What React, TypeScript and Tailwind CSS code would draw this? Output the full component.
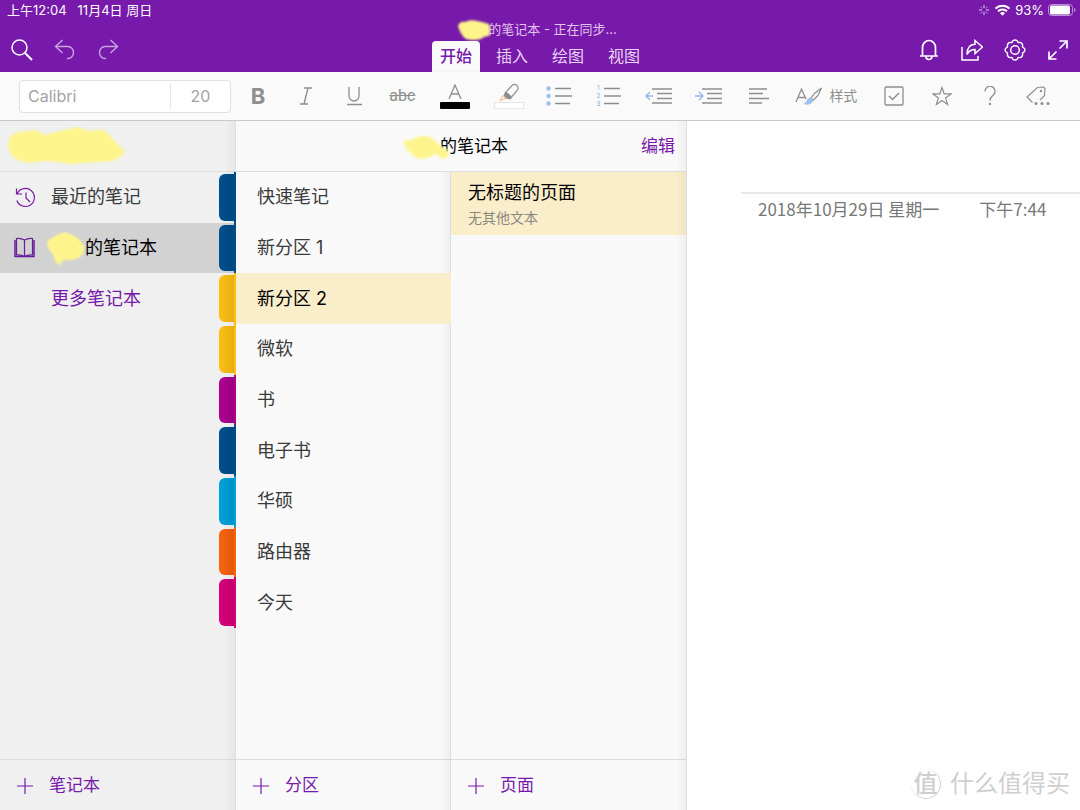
import { useState } from 'react';
import type { ReactNode } from 'react';
import clsx from 'clsx';

const sections = [
  { name: '快速笔记', color: 'bg-[#004f8d]' },
  { name: '新分区 1', color: 'bg-[#004f8d]' },
  { name: '新分区 2', color: 'bg-[#ffc013]' },
  { name: '微软', color: 'bg-[#ffc013]' },
  { name: '书', color: 'bg-[#ae008e]' },
  { name: '电子书', color: 'bg-[#004f8d]' },
  { name: '华硕', color: 'bg-[#00a2dc]' },
  { name: '路由器', color: 'bg-[#f9640c]' },
  { name: '今天', color: 'bg-[#d8007a]' },
];

const ribbonTabs = ['开始', '插入', '绘图', '视图'];

function Icon({ w = 22, h = 22, children }: { w?: number; h?: number; children: ReactNode }) {
  return (
    <svg
      width={w}
      height={h}
      viewBox={`0 0 ${w} ${h}`}
      fill="none"
      stroke="currentColor"
      strokeWidth="1.5"
      className="shrink-0"
      aria-hidden="true"
    >
      {children}
    </svg>
  );
}

// Marker scribble that hides a name
function Smudge({ className, d, viewBox }: { className: string; d: string; viewBox: string }) {
  return (
    <svg className={clsx('shrink-0 overflow-visible blur-[1px]', className)} viewBox={viewBox} aria-hidden="true">
      <path d={d} fill="#fdf58c" />
    </svg>
  );
}

function ToolButton({ label, className = 'w-8', children }: { label: string; className?: string; children: ReactNode }) {
  return (
    <button aria-label={label} className={clsx('flex h-9 shrink-0 items-center justify-center', className)}>
      {children}
    </button>
  );
}

function AddButton({ label }: { label: string }) {
  return (
    <button className="flex h-[51px] w-full shrink-0 items-center gap-4 border-t border-[#dcdcdc] pt-px pl-[17px] text-[17px] text-[#7719aa]">
      <Icon w={16} h={16}>
        <path d="M8 0v16M0 8h16" strokeWidth="1.2" />
      </Icon>
      {label}
    </button>
  );
}

// Soft shade along the right edge of a panel
function EdgeShade() {
  return (
    <div className="pointer-events-none absolute inset-y-0 right-0 w-3 border-r border-[#dedede] bg-linear-to-r from-transparent to-black/4" />
  );
}

function StatusBar() {
  return (
    <div className="flex h-5 items-center justify-between pr-[4px] pl-[7px] text-[13px] leading-5">
      <div className="flex gap-[11px]">
        <span>上午12:04</span>
        <span>11月4日 周日</span>
      </div>
      <div className="flex items-center gap-1">
        <Icon w={12} h={12}>
          <path d="M6 1v3M6 8v3M1 6h3M8 6h3" strokeWidth="1" opacity=".8" />
          <path d="M2.5 2.5l2 2M7.5 7.5l2 2M9.5 2.5l-2 2M4.500 7.500l-2 2" strokeWidth="1" opacity=".5" />
        </Icon>
        <Icon w={17} h={12}>
          <path d="M1.500 4.600a10 10 0 0 1 14 0M4 7.300a6.400 6.400 0 0 1 9 0" strokeWidth="2" />
          <path d="M6 9.200a3.600 3.600 0 0 1 5 0l-2.500 2.600z" fill="currentColor" stroke="none" />
        </Icon>
        <span>93%</span>
        <Icon w={28} h={12}>
          <rect x=".5" y=".5" width="24" height="11" rx="3" strokeWidth="1" opacity=".5" />
          <rect x="2" y="1.500" width="20" height="9" rx="1.500" fill="currentColor" stroke="none" />
          <path d="M26 4v4c1-.3 1.500-1 1.500-2S27 4.300 26 4z" fill="currentColor" stroke="none" opacity=".5" />
        </Icon>
      </div>
    </div>
  );
}

function AppBar() {
  const [active, setActive] = useState('开始');

  return (
    <header className="bg-[#7719aa] text-white">
      <StatusBar />
      <div className="grid h-[52px] grid-cols-[1fr_auto_1fr]">
        <div className="flex items-center gap-[21px] pt-2 pl-[11px]">
          <button aria-label="搜索">
            <Icon>
              <circle cx="8.500" cy="8.500" r="7.500" />
              <path d="M14 14l7 7" strokeWidth="2" />
            </Icon>
          </button>
          <button aria-label="撤消" className="opacity-60">
            <Icon>
              <path d="M8.500 1L1.500 7.500l7 6.500M1.500 7.500h12.500a5.500 6 0 0 1 0 12h-1" strokeWidth="1.400" />
            </Icon>
          </button>
          <button aria-label="恢复" className="opacity-60">
            <Icon>
              <path d="M13.500 1l7 6.500-7 6.500M20.500 7.500H8a5.500 6 0 0 0 0 12h1" strokeWidth="1.400" />
            </Icon>
          </button>
        </div>

        <div className="flex flex-col items-center">
          <p className="mr-[6px] flex h-[19px] items-center text-[13px] text-[#e0c5ee]">
            <Smudge
              className="-mr-0.5 h-5 w-[33px]"
              viewBox="0 0 33 20"
              d="M1 6Q3 1 8 2Q13 -1 20 1Q26 2 32 4Q34 10 32 16Q27 16 24 19Q16 21 9 19Q4 16 1 6Z"
            />
            的笔记本 - 正在同步...
          </p>
          <nav className="mt-0.5 flex h-[31px] gap-2">
            {ribbonTabs.map((tab) => (
              <button
                key={tab}
                onClick={() => setActive(tab)}
                className={clsx(
                  'w-12 rounded-t pb-0.5 text-base',
                  active === tab ? 'bg-[#fafafa] font-medium text-[#7719aa]' : 'text-[#ead5f4]'
                )}
              >
                {tab}
              </button>
            ))}
          </nav>
        </div>

        <div className="flex items-center justify-end gap-[21px] pt-2 pr-[11px]">
          <button aria-label="通知">
            <Icon>
              <path d="M2 17h18M4.500 17V8.500a6.500 7 0 0 1 13 0V17M8 17.500a3 3 0 0 0 6 0" strokeWidth="1.700" />
            </Icon>
          </button>
          <button aria-label="共享">
            <Icon>
              <path d="M1 8v13h16v-4" />
              <path d="M14 1.500L21.500 8l-7.500 6.500v-4c-4 0-6.500 2-8 5C6 9 8.500 5.500 14 5.300z" />
            </Icon>
          </button>
          <button aria-label="设置">
            <Icon>
              <circle cx="11" cy="11" r="4.300" />
              <path
                d="M8.800 1.800Q11 .2 13.200 1.800L14 3.500 16.200 3.400Q18.700 4.200 18.600 6.600L18.500 8 20.200 9.200Q21.500 11 20.200 12.800L18.500 14 18.600 15.800Q18.300 18.300 15.800 18.600L14 18.500 13.200 20.200Q11 21.800 8.800 20.200L8 18.500 6.200 18.600Q3.700 18.300 3.400 15.800L3.500 14 1.800 12.800Q.5 11 1.800 9.200L3.500 8 3.400 6.200Q3.700 3.700 6.200 3.400L8 3.500z"
                strokeLinejoin="round"
                strokeWidth="1.400"
              />
            </Icon>
          </button>
          <button aria-label="全屏">
            <Icon>
              <path d="M12.500 2H20v7.500M20 2l-7.500 7.500M2 12.500V20h7.500M2 20l7.500-7.500" strokeWidth="1.700" />
            </Icon>
          </button>
        </div>
      </div>
    </header>
  );
}

function Toolbar() {
  return (
    <div className="relative flex h-[49px] items-center border-b border-[#c9c9c9] bg-[#fafafa] pl-[19px] text-[#8e8e8e] shadow-[0_1px_4px_rgba(0,0,0,0.08)]">
      <div className="flex h-[33px] w-[212px] shrink-0 items-center rounded border border-[#e0e0e0] bg-white text-base text-[#a3a3a3]">
        <select aria-label="字体" className="h-full w-[150px] appearance-none px-2 outline-none">
          <option>Calibri</option>
        </select>
        <select
          aria-label="字号"
          className="h-[26px] flex-1 appearance-none border-l border-[#e6e6e6] text-center outline-none [text-align-last:center]"
        >
          <option>20</option>
        </select>
      </div>

      <div className="flex flex-1 items-center justify-between pr-[26px] pl-[11px]">
        <ToolButton label="加粗">
          <span className="text-[22px] leading-6 font-bold">B</span>
        </ToolButton>
        <ToolButton label="倾斜">
          <Icon w={12} h={18}>
            <path d="M4 1h8M0 17h8M8 1L4 17" strokeWidth="1.400" />
          </Icon>
        </ToolButton>
        <ToolButton label="下划线">
          <Icon w={16} h={20}>
            <path d="M3 1v9a5 5 0 0 0 10 0V1M1 18.500h15" strokeWidth="1.300" />
          </Icon>
        </ToolButton>
        <ToolButton label="删除线">
          <span className="font-['Roboto'] text-base line-through">abc</span>
        </ToolButton>
        <ToolButton label="字体颜色" className="w-10 flex-col gap-[3px]">
          <Icon w={14} h={15}>
            <path d="M1 15L7 1l6 14M3.300 10h7.400" strokeWidth="1.300" />
          </Icon>
          <span className="h-[7px] w-[30px] rounded-[1px] bg-black" />
        </ToolButton>
        <ToolButton label="突出显示" className="w-9 flex-col">
          <Icon w={20} h={19}>
            <path d="M7.500 8.500L13.500 2Q15.500 .500 18 2.500Q20 5 18.500 7L13 13.500" strokeWidth="1.200" />
            <path d="M6.500 8l7 6-2 2.500-4.500-1-2.500-3z" fill="currentColor" stroke="none" />
            <path d="M4 12.500l3 3-6 2z" stroke="#f6b77b" strokeWidth="1" />
          </Icon>
          <span className="h-[7px] w-[30px] border border-[#e6e6e6] bg-white" />
        </ToolButton>
        <ToolButton label="项目符号">
          <Icon w={26} h={20}>
            <path d="M9 2.500h16M9 10h17M9 17.500h15" strokeWidth="1.300" />
            <g fill="#9cbfe8" stroke="none">
              <circle cx="2.500" cy="2.500" r="2.200" />
              <circle cx="2.500" cy="10" r="2.200" />
              <circle cx="2.500" cy="17.500" r="2.200" />
            </g>
          </Icon>
        </ToolButton>
        <ToolButton label="编号" className="w-9 gap-1">
          <span className="flex flex-col font-['Roboto'] text-[7px] leading-[8px] text-[#7fb0e8]">
            <span>1</span>
            <span>2</span>
            <span>3</span>
          </span>
          <Icon w={17} h={20}>
            <path d="M0 2.500h16M0 10h17M0 17.500h15" strokeWidth="1.300" />
          </Icon>
        </ToolButton>
        <ToolButton label="减少缩进">
          <Icon w={28} h={18}>
            <path d="M7 2h20M12 6.500h15M12 11.500h15M7 16h20" strokeWidth="1.300" />
            <path d="M8 9H1.500M5 5L1 9l4 4" stroke="#8fb8e8" strokeWidth="1.300" />
          </Icon>
        </ToolButton>
        <ToolButton label="增加缩进" className="w-9">
          <Icon w={28} h={18}>
            <path d="M7 2h20M12 6.500h15M12 11.500h15M7 16h20" strokeWidth="1.300" />
            <path d="M0 9h7.500M4 5l4 4-4 4" stroke="#8fb8e8" strokeWidth="1.300" />
          </Icon>
        </ToolButton>
        <ToolButton label="对齐">
          <Icon w={20} h={18}>
            <path d="M0 2h18M0 6.500h14M0 11.500h20M0 16h13" strokeWidth="1.300" />
          </Icon>
        </ToolButton>
        <button className="flex h-9 w-[70px] shrink-0 items-center justify-center gap-[6px] text-sm">
          <Icon w={28} h={20}>
            <path d="M1 16L6.500 3 11 13M3 11.500h6.500" strokeWidth="1.300" />
            <path d="M26.500 2l-6.500 5-4 5 2 2.500 5-5z" strokeWidth="1.200" />
            <path d="M15 11.500c-3 .5-3 4.500-6.500 6.500 4.500 1.500 9 .5 9.500-4z" fill="#9cc3f0" stroke="none" />
          </Icon>
          样式
        </button>
        <ToolButton label="待办事项">
          <Icon w={20} h={20}>
            <rect x="1" y="1" width="18" height="18" rx="1" strokeWidth="1.300" />
            <path d="M5 10l3.500 3.500L15 7" />
          </Icon>
        </ToolButton>
        <ToolButton label="重要">
          <Icon w={20} h={20}>
            <path d="M10 1.500l2.200 6.300 6.800.1-5.400 4 2 6.500L10 14.500l-5.600 3.900 2-6.500-5.400-4 6.800-.1z" strokeWidth="1.200" />
          </Icon>
        </ToolButton>
        <ToolButton label="问题">
          <Icon w={12} h={20}>
            <path d="M1 5.500a5 5 0 1 1 8.500 3.300C7.500 10.500 6 11.500 6 14.500" strokeWidth="1.300" />
            <circle cx="6" cy="18" r="1.200" fill="currentColor" stroke="none" />
          </Icon>
        </ToolButton>
        <ToolButton label="更多标记">
          <Icon w={24} h={20}>
            <path d="M6.500 16.500L1 11 11.500 1.500l6-.5 1.500 1.500-.5 7-4.500 4.500" strokeWidth="1.200" />
            <g fill="currentColor" stroke="none">
              <circle cx="15" cy="5" r="1.200" />
              <circle cx="10" cy="17.500" r="1.500" />
              <circle cx="16" cy="17.500" r="1.500" />
              <circle cx="22" cy="17.500" r="1.500" />
            </g>
          </Icon>
        </ToolButton>
      </div>
    </div>
  );
}

function NotebookPanel() {
  return (
    <aside className="relative flex w-[236px] shrink-0 flex-col bg-[#f0f0f0]">
      <div className="flex h-[51px] shrink-0 items-center border-b border-[#dedede] pl-2">
        <Smudge
          className="h-[38px] w-[117px]"
          viewBox="0 0 117 38"
          d="M1 14Q2 6 12 5L28 3L36 8L70 0L80 4L96 3Q104 10 108 16L117 24Q114 30 104 34L62 37Q50 34 34 34Q20 38 8 32Q-2 24 1 14Z"
        />
      </div>
      <ul className="grid h-[152px] grid-rows-3 text-lg text-[#3a3a3a]">
        <li>
          <button className="flex h-full w-full items-center gap-[15px] pl-[15px]">
            <span className="text-[#7719aa]">
              <Icon w={21} h={21}>
                <path d="M2.300 6.500a9 9 0 1 1-.4 7M1.500 1.500V7H7M11 5.500v5.500l4 4" strokeWidth="1.200" />
              </Icon>
            </span>
            最近的笔记
          </button>
        </li>
        <li>
          <button className="flex h-full w-full items-center bg-[#d2d2d2] pl-[14px] text-black">
            <span className="text-[#6a1a9c]">
              <Icon w={21} h={21}>
                <path d="M10.500 3Q7 1 2.500 1.500V18Q7 17.500 10.500 19.500Q14 17.500 18.500 18V1.500Q14 1 10.500 3V19.500" strokeWidth="1.200" />
                <path d="M1 3v16.500h9.500M20 3v16.500h-9.500" strokeWidth="1.500" />
              </Icon>
            </span>
            <Smudge
              className="ml-3 h-[34px] w-[38px]"
              viewBox="0 0 38 34"
              d="M0 10L8 5Q14 2 18 1Q26 4 31 7L37 15Q38 22 33 26Q26 30 16 29L13 34Q8 33 7 25Q0 18 0 10Z"
            />
            的笔记本
          </button>
        </li>
        <li>
          <button className="flex h-full w-full items-center pl-[51px] text-[#7719aa]">更多笔记本</button>
        </li>
      </ul>
      <div className="flex-1" />
      <AddButton label="笔记本" />
      <EdgeShade />
    </aside>
  );
}

function SectionList() {
  const [selected, setSelected] = useState('新分区 2');

  return (
    <div className="relative flex w-[215px] shrink-0 flex-col">
      <EdgeShade />
      <ul className="grid h-[456px] grid-rows-9 text-lg text-[#3a3a3a]">
        {sections.map((section) => (
          <li key={section.name} className="relative">
            {/* Colored tab, hangs over the notebook panel */}
            <span className="absolute inset-y-0 right-full flex w-[17px]">
              <span className={clsx('my-0.5 flex-1 overflow-hidden rounded-l-md', section.color)}>
                <span className="block h-full bg-linear-to-r from-transparent to-black/10" />
              </span>
              <span className={clsx('w-0.5', section.color)} />
            </span>
            <button
              onClick={() => setSelected(section.name)}
              className={clsx(
                'h-full w-full pl-[21px] text-left',
                selected === section.name && 'bg-[#faedca] text-black'
              )}
            >
              {section.name}
            </button>
          </li>
        ))}
      </ul>
      <div className="flex-1" />
      <AddButton label="分区" />
    </div>
  );
}

function PageList() {
  return (
    <div className="flex w-[236px] shrink-0 flex-col">
      <button className="flex h-[63px] flex-col bg-[#faedca] pt-2 pl-[17px] text-left">
        <span className="text-lg leading-[26px] text-black">无标题的页面</span>
        <span className="text-sm leading-6 text-[#8a8781]">无其他文本</span>
      </button>
      <div className="flex-1" />
      <AddButton label="页面" />
    </div>
  );
}

function Canvas() {
  return (
    <main className="relative min-w-0 flex-1 bg-white">
      <div className="mt-[71px] ml-[54px] border-t-2 border-[#e8e8e8] pl-[17px] font-['Noto_Sans_CJK_SC',sans-serif] text-[17px] leading-[30px] text-[#777]">
        <div className="flex gap-10 whitespace-nowrap">
          <span>2018年10月29日 星期一</span>
          <span>下午7:44</span>
        </div>
      </div>
      <div className="absolute right-[10px] bottom-[10px] flex items-center gap-[9px] text-2xl leading-8 text-[#cfcfcf]">
        <span className="flex h-[30px] w-[30px] items-center justify-center rounded-full border-r border-b border-[#cfcfcf] font-medium">
          值
        </span>
        <span>什么值得买</span>
      </div>
    </main>
  );
}

export default function App() {
  return (
    <div className="flex min-h-screen flex-col overflow-x-hidden font-['Inter','Noto_Sans_CJK_SC',sans-serif]">
      <AppBar />
      <Toolbar />
      <div className="flex flex-1">
        <NotebookPanel />
        <div className="relative flex shrink-0 flex-col bg-[#f9f9f9]">
          <div className="grid h-[51px] shrink-0 grid-cols-[1fr_auto_1fr] items-center border-b border-[#dedede] px-3 pt-0.5 text-[17px]">
            <h1 className="col-start-2 flex items-center text-black">
              <Smudge
                className="-mr-[9px] -ml-3 h-[25px] w-[46px]"
                viewBox="0 0 46 25"
                d="M0 6Q8 6 12 3Q20 -1 29 3L36 10L45 15Q47 20 42 24Q36 22 32 19Q24 25 13 23Q8 18 4 15Z"
              />
              的笔记本
            </h1>
            <button className="justify-self-end text-[#7719aa]">编辑</button>
          </div>
          <div className="flex flex-1">
            <SectionList />
            <PageList />
          </div>
          <EdgeShade />
        </div>
        <Canvas />
      </div>
    </div>
  );
}
